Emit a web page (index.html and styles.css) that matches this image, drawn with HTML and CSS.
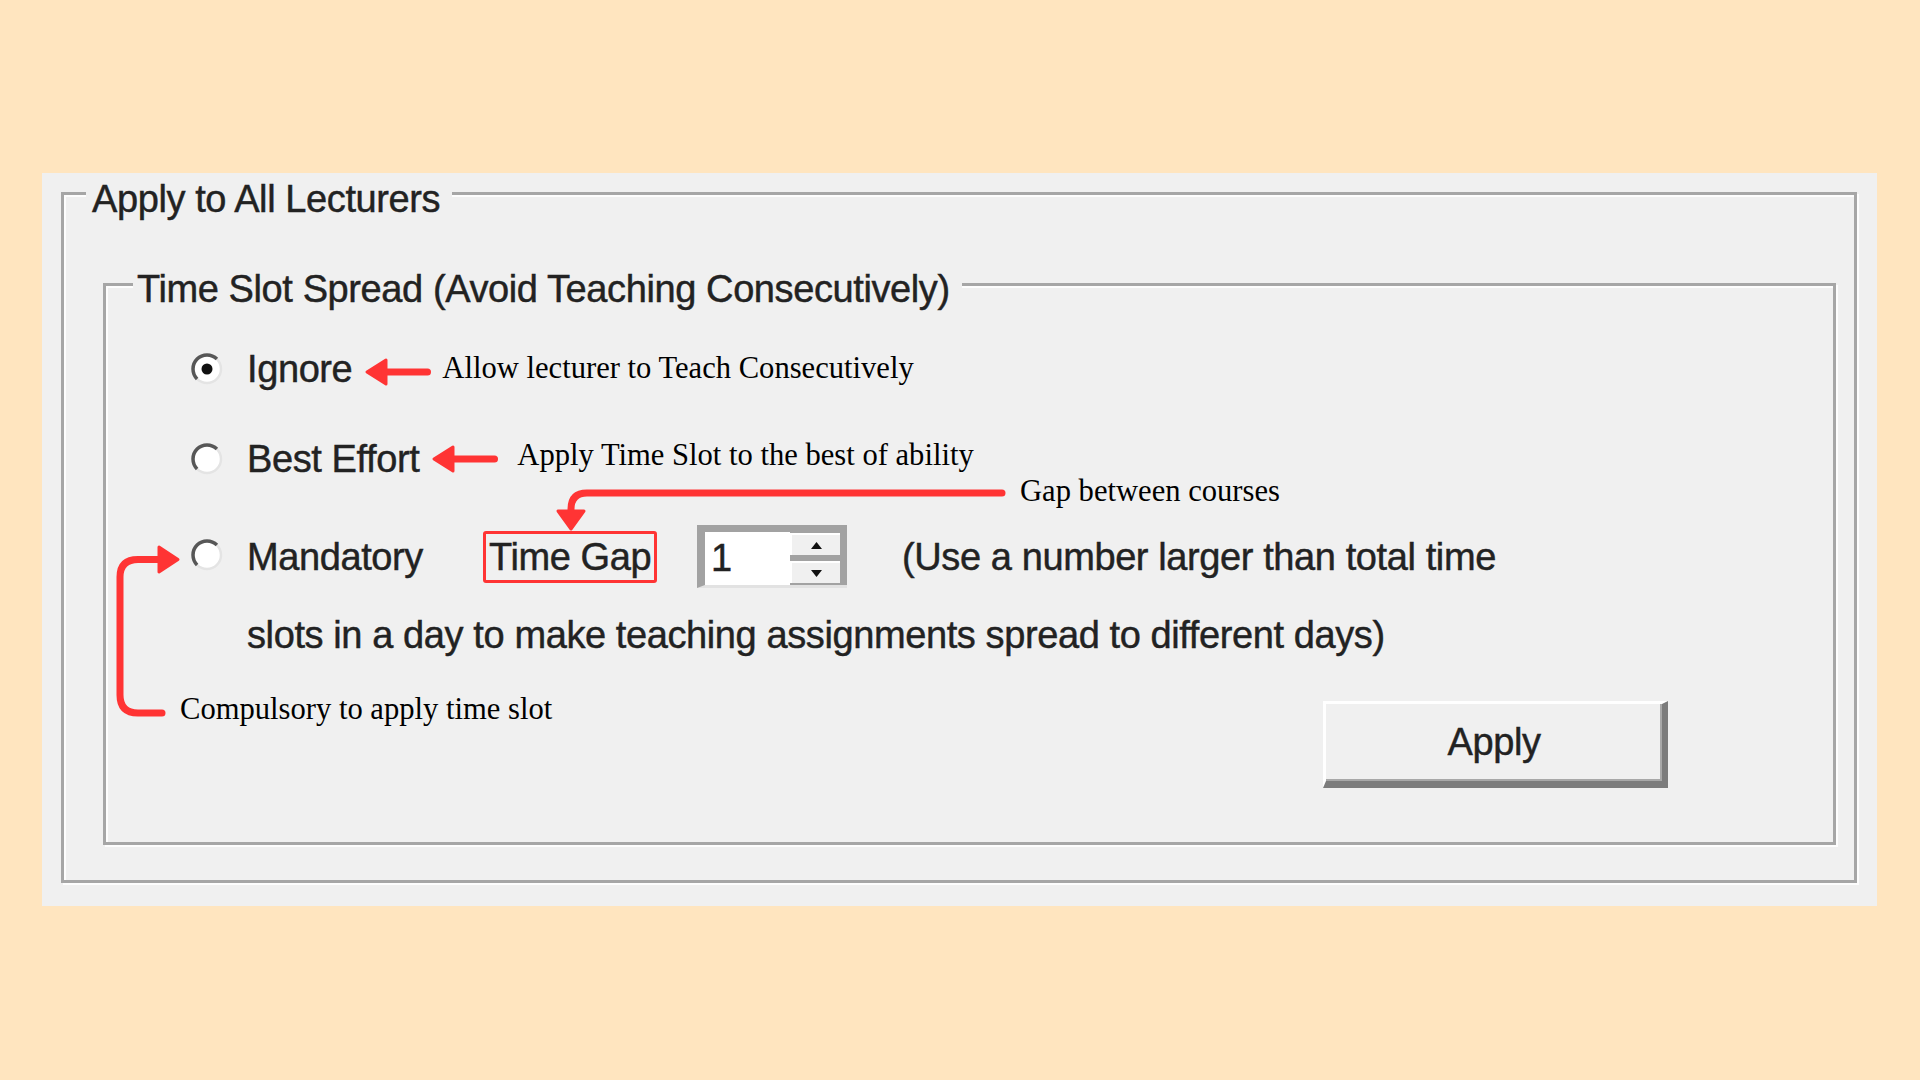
FILE: index.html
```html
<!DOCTYPE html>
<html lang="en">
<head>
<meta charset="utf-8">
<title>Apply to All Lecturers</title>
<link rel="stylesheet" href="styles.css">
</head>
<body>
<div class="panel">
  <div class="group group-outer">
    <div class="group-title">Apply to All Lecturers</div>
    <div class="group group-inner">
      <div class="group-title">Time Slot Spread (Avoid Teaching Consecutively)</div>

      <div class="row row-1">
        <svg class="radio" viewBox="0 0 34 34" width="34" height="34">
          <circle cx="17" cy="17" r="14" fill="#fff" stroke="#e4e4e4" stroke-width="2.5"/>
          <path d="M7.1 26.9 A14 14 0 0 1 26.9 7.1" fill="none" stroke="#575757" stroke-width="3.5"/>
          <circle cx="17" cy="17" r="5.5" fill="#111"/>
        </svg>
        <span class="radio-label">Ignore</span>
        <svg class="arrow-left arrow-1" viewBox="0 0 66 28" width="66" height="28">
          <polygon points="2,14 21,2 21,26" fill="#ff3434" stroke="#ff3434" stroke-width="3" stroke-linejoin="round"/>
          <line x1="20" y1="14" x2="62.5" y2="14" stroke="#ff3434" stroke-width="7" stroke-linecap="round"/>
        </svg>
        <span class="note note-1">Allow lecturer to Teach Consecutively</span>
      </div>

      <div class="row row-2">
        <svg class="radio" viewBox="0 0 34 34" width="34" height="34">
          <circle cx="17" cy="17" r="14" fill="#fff" stroke="#e4e4e4" stroke-width="2.5"/>
          <path d="M7.1 26.9 A14 14 0 0 1 26.9 7.1" fill="none" stroke="#575757" stroke-width="3.5"/>
        </svg>
        <span class="radio-label">Best Effort</span>
        <svg class="arrow-left arrow-2" viewBox="0 0 66 28" width="66" height="28">
          <polygon points="2,14 21,2 21,26" fill="#ff3434" stroke="#ff3434" stroke-width="3" stroke-linejoin="round"/>
          <line x1="20" y1="14" x2="62.5" y2="14" stroke="#ff3434" stroke-width="7" stroke-linecap="round"/>
        </svg>
        <span class="note note-2">Apply Time Slot to the best of ability</span>
      </div>

      <div class="row row-3">
        <svg class="radio radio-3" viewBox="0 0 34 34" width="34" height="34">
          <circle cx="17" cy="17" r="14" fill="#fff" stroke="#e4e4e4" stroke-width="2.5"/>
          <path d="M7.1 26.9 A14 14 0 0 1 26.9 7.1" fill="none" stroke="#575757" stroke-width="3.5"/>
        </svg>
        <span class="radio-label label-mandatory">Mandatory</span>
        <span class="gap-box">Time Gap</span>
        <div class="spin">
          <span class="spin-value">1</span>
          <div class="spin-btns">
            <span class="spin-btn">
              <svg viewBox="0 0 11 7" width="11" height="7"><polygon points="0,7 5.5,0 11,7" fill="#111"/></svg>
            </span>
            <span class="spin-btn">
              <svg viewBox="0 0 11 7" width="11" height="7"><polygon points="0,0 11,0 5.5,7" fill="#111"/></svg>
            </span>
          </div>
        </div>
        <span class="hint">(Use a number larger than total time</span>
      </div>

      <div class="row row-4">
        <span>slots in a day to make teaching assignments spread to different days)</span>
      </div>

      <div class="row row-5">
        <span class="note note-5">Compulsory to apply time slot</span>
        <button class="btn-apply" type="button">Apply</button>
      </div>

      <svg class="bracket" viewBox="0 0 75 180" width="75" height="180">
        <path d="M52 173 H28 Q10 173 10 155 V37 Q10 19.5 28 19.5 H50" fill="none" stroke="#ff3434" stroke-width="7" stroke-linecap="round" stroke-linejoin="round"/>
        <polygon points="49,7 68,19.5 49,32" fill="#ff3434" stroke="#ff3434" stroke-width="3" stroke-linejoin="round"/>
      </svg>

      <svg class="gap-connector" viewBox="0 0 460 55" width="460" height="55">
        <path d="M452 13 H37 Q21 13 21 29 V34" fill="none" stroke="#ff3434" stroke-width="7" stroke-linecap="round" stroke-linejoin="round"/>
        <polygon points="8,31 34,31 21,49" fill="#ff3434" stroke="#ff3434" stroke-width="3" stroke-linejoin="round"/>
      </svg>
      <span class="note gap-note">Gap between courses</span>
    </div>
  </div>
</div>
</body>
</html>
```

FILE: styles.css
```css
html, body {
  margin: 0;
  padding: 0;
}

body {
  background: #ffe5bf;
  width: 1920px;
  height: 1080px;
  overflow: hidden;
}

.panel {
  box-sizing: border-box;
  width: 1835px;
  height: 733px;
  margin: 173px 0 0 42px;
  padding: 19px 0 0 19px;
  background: #f0f0f0;
  font-family: "Liberation Sans", Arial, sans-serif;
  color: #222;
}

.group {
  box-sizing: border-box;
  border: 3px solid #a6a6a6;
  box-shadow: inset 2px 2px 0 #fdfdfd, 2px 2px 0 #fdfdfd;
}

.group-outer {
  width: 1796px;
  height: 691px;
  padding-top: 0.1px;
}

.group-inner {
  position: relative;
  width: 1733px;
  height: 562px;
  margin: 65px 0 0 39px;
}

.group-title {
  width: fit-content;
  background: #f0f0f0;
  font-size: 38px;
  line-height: 38px;
  letter-spacing: -0.4px;
  white-space: nowrap;
  -webkit-text-stroke: 0.45px #222;
}

.group-outer > .group-title {
  margin: -15px 0 0 22px;
  padding: 0 12px 0 6px;
}

.group-inner > .group-title {
  margin: -16px 0 0 27px;
  padding: 0 12px 0 4px;
}

.row {
  display: flex;
  align-items: center;
  height: 40px;
  font-size: 38px;
  line-height: 40px;
  letter-spacing: -0.4px;
  white-space: nowrap;
  -webkit-text-stroke: 0.45px #222;
}

.row-1 { margin-top: 41px; padding-left: 84px; }
.row-2 { margin-top: 50px; padding-left: 84px; }
.row-3 { margin-top: 46px; padding-left: 84px; height: 63px; }
.row-4 { margin-top: 27px; padding-left: 141px; }
.row-5 { margin-top: 34px; padding-left: 74px; height: auto; align-items: flex-start; }

.radio {
  flex: none;
  filter: blur(0.6px);
}

.radio-3 { margin-top: -4px; }

.radio-label {
  margin-left: 23px;
}

.label-mandatory {
  width: 236px;
}

.arrow-left {
  flex: none;
  margin-top: 6px;
}

.arrow-1 { margin-left: 13px; }
.arrow-2 { margin-left: 13px; margin-top: 0; }

.note {
  font-family: "Liberation Serif", "Times New Roman", serif;
  font-size: 30.6px;
  line-height: 40px;
  letter-spacing: 0;
  color: #000;
  white-space: nowrap;
  -webkit-text-stroke: 0;
}

.note-1 { margin-left: 11px; margin-top: -2px; }
.note-2 { margin-left: 19px; margin-top: -9px; }

.gap-box {
  box-sizing: border-box;
  display: flex;
  align-items: center;
  width: 174px;
  height: 52px;
  padding-left: 3px;
  border: 3px solid #ff3434;
  border-radius: 3px;
}

.spin {
  box-sizing: border-box;
  display: flex;
  width: 150px;
  height: 63px;
  margin-left: 40px;
  border-style: solid;
  border-width: 7px 0 3px 8px;
  border-color: #a2a2a2 transparent #e2e2e2 #a2a2a2;
  background: #fff;
}

.spin-value {
  flex: 1;
  padding-left: 6px;
  line-height: 53px;
}

.spin-btns {
  box-sizing: border-box;
  display: flex;
  flex-direction: column;
  gap: 6px;
  width: 57px;
  padding: 1px 7px 2px 0;
  background: #a2a2a2;
}

.spin-btn {
  flex: 1;
  display: flex;
  align-items: center;
  justify-content: center;
  background: #f0f0f0;
  border-top: 2px solid #fff;
  border-left: 2px solid #fff;
}

.hint {
  margin-left: 55px;
}

.btn-apply {
  box-sizing: border-box;
  flex: none;
  width: 345px;
  height: 87px;
  margin: 12px 165px 0 auto;
  padding: 0 0 0 0;
  font-family: "Liberation Sans", Arial, sans-serif;
  font-size: 38px;
  letter-spacing: -0.4px;
  color: #222;
  -webkit-text-stroke: 0.45px #222;
  background: #f0f0f0;
  border-style: solid;
  border-width: 3px 6px 7px 3px;
  border-color: #ffffff #7c7c7c #7c7c7c #ffffff;
  box-shadow: inset -2px -2px 0 #a8a8a8;
}

.bracket {
  position: absolute;
  left: 4px;
  top: 254px;
}

.gap-connector {
  position: absolute;
  left: 444px;
  top: 194px;
}

.gap-note {
  position: absolute;
  left: 914px;
  top: 185px;
}
```
